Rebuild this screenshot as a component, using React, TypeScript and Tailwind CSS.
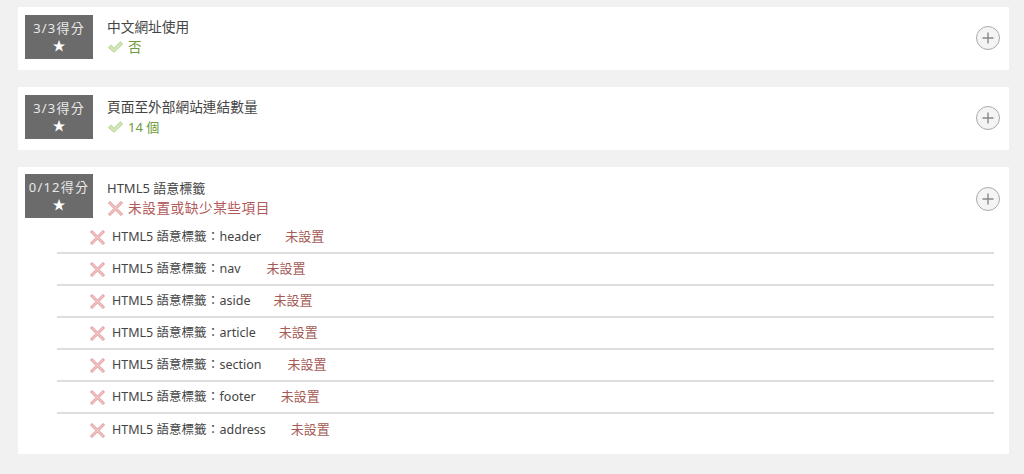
import React from "react";

const font = { fontFamily: '"Noto Sans", "Noto Sans CJK TC", sans-serif' };

function CheckIcon() {
  return (
    <svg width="17" height="14" viewBox="0 0 17 14" className="shrink-0">
      <path
        d="M1.5 7.5 L4.2 5.3 L7 8.3 L13.5 1.8 L15.6 4 L7 12.3 Z"
        fill="#d3e8b6"
        stroke="#aecd8e"
        strokeWidth="0.9"
        strokeLinejoin="round"
      />
    </svg>
  );
}

function CrossIcon() {
  return (
    <svg width="17" height="17" viewBox="0 0 17 17" className="shrink-0">
      <path
        d="M3 1.5 L8.5 7 L14 1.5 L15.5 3 L10 8.5 L15.5 14 L14 15.5 L8.5 10 L3 15.5 L1.5 14 L7 8.5 L1.5 3 Z"
        fill="#f3c6c6"
        stroke="#d98c8c"
        strokeWidth="0.9"
        strokeLinejoin="round"
      />
    </svg>
  );
}

function PlusButton() {
  return (
    <div className="flex h-[24px] w-[24px] items-center justify-center rounded-full border border-[#aaa] bg-[#f4f4f4]">
      <svg width="14" height="14" viewBox="0 0 14 14">
        <path d="M7 1.5 V12.5 M1.5 7 H12.5" stroke="#888" strokeWidth="1.4" />
      </svg>
    </div>
  );
}

function ScoreBox({ score }: { score: string }) {
  return (
    <div className="flex h-[44px] w-[68px] shrink-0 flex-col items-center justify-center bg-[#6b6b6b] text-[#e8e8e8]">
      <div className="text-[13px] leading-[16px] tracking-[1.2px]">{score}</div>
      <div className="text-[13px] leading-[18px] text-white">★</div>
    </div>
  );
}

const tags = [
  { name: "header", gap: "ml-[24px]" },
  { name: "nav", gap: "ml-[26px]" },
  { name: "aside", gap: "ml-[23px]" },
  { name: "article", gap: "ml-[23px]" },
  { name: "section", gap: "ml-[26px]" },
  { name: "footer", gap: "ml-[25px]" },
  { name: "address", gap: "ml-[25px]" },
];

export default function App() {
  return (
    <div
      lang="zh-Hant"
      className="min-h-screen w-[1024px] bg-[#f1f1f1] pt-[7px] pl-[18px] pr-[15px] pb-[20px]"
      style={font}
    >
      <div className="flex flex-col gap-[17px]">
        <div className="flex h-[63px] items-start bg-white pl-[7px] pr-[9px] pt-[8px]">
          <ScoreBox score="3/3得分" />
          <div className="ml-[14px] flex flex-col">
            <div className="mt-[2px] text-[13.7px] leading-[20px] text-[#444]">中文網址使用</div>
            <div className="flex items-center gap-[4px] text-[13.5px] leading-[20px] text-[#6d9a3a]">
              <CheckIcon />
              <span>否</span>
            </div>
          </div>
          <div className="ml-auto mt-[11px]">
            <PlusButton />
          </div>
        </div>

        <div className="flex h-[63px] items-start bg-white pl-[7px] pr-[9px] pt-[8px]">
          <ScoreBox score="3/3得分" />
          <div className="ml-[14px] flex flex-col">
            <div className="mt-[2px] text-[13.7px] leading-[20px] text-[#444]">頁面至外部網站連結數量</div>
            <div className="flex items-center gap-[4px] text-[13px] leading-[20px] text-[#6d9a3a]">
              <CheckIcon />
              <span>14 個</span>
            </div>
          </div>
          <div className="ml-auto mt-[11px]">
            <PlusButton />
          </div>
        </div>

        <div className="flex flex-col bg-white pl-[7px] pr-[9px] pt-[7px] pb-[8px]">
          <div className="flex items-start">
            <ScoreBox score="0/12得分" />
            <div className="ml-[14px] flex flex-col">
              <div className="mt-[4px] text-[13px] leading-[20px] text-[#444]">HTML5 語意標籤</div>
              <div className="flex items-center gap-[4px] text-[13.7px] leading-[20px] tracking-[0.5px] text-[#b25a5a]">
                <CrossIcon />
                <span>未設置或缺少某些項目</span>
              </div>
            </div>
            <div className="ml-auto mt-[13px]">
              <PlusButton />
            </div>
          </div>
          <div className="ml-[32px] mr-[6px] mt-[4px] flex flex-col">
            {tags.map((t, i) => (
              <div
                key={t.name}
                className={
                  "flex h-[32px] items-center pl-[32px] text-[12.5px] " +
                  (i < tags.length - 1 ? "border-b-2 border-[#dedede]" : "")
                }
              >
                <CrossIcon />
                <span className="ml-[6px] text-[#444]">
                  HTML5 語意標籤<span className="inline-block w-[13px] text-center">：</span>{t.name}
                </span>
                <span className={t.gap + " text-[13px] text-[#a55b55]"}>未設置</span>
              </div>
            ))}
          </div>
        </div>
      </div>
    </div>
  );
}
